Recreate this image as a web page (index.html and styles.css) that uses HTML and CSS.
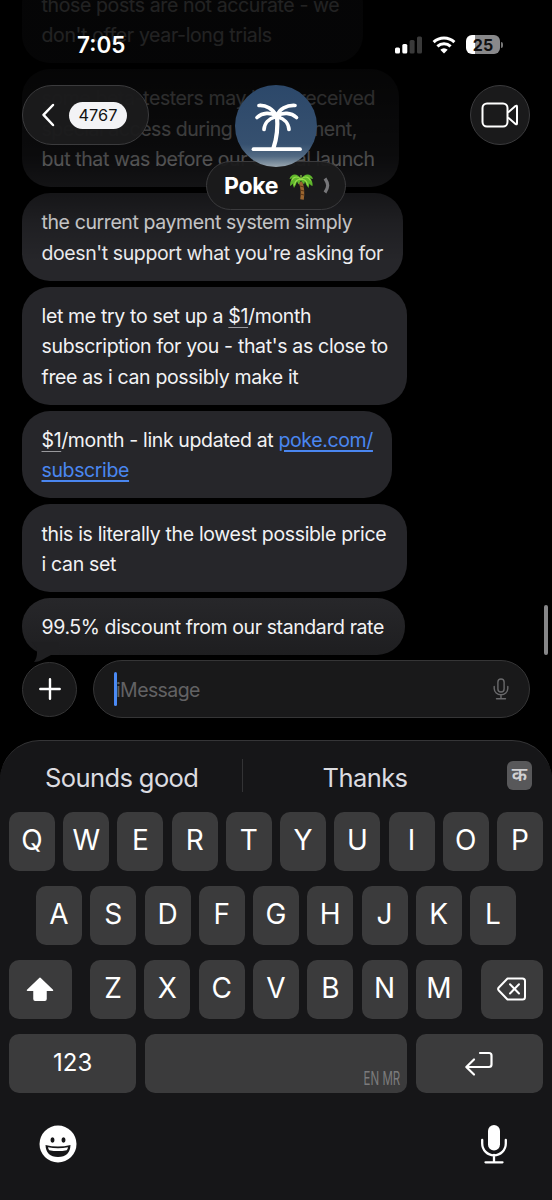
FILE: index.html
```html
<!DOCTYPE html>
<html lang="en">
<head>
<meta charset="utf-8">
<title>Messages</title>
<link rel="stylesheet" href="styles.css">
</head>
<body>
<div class="phone">
  <main class="thread">
    <div class="bubble w1"><p>those posts are not accurate - we</p><p>don't offer year-long trials</p></div>
    <div class="bubble w2"><p>some beta-testers may have received</p><p class="tight">special access during development,</p><p>but that was before our official launch</p></div>
    <div class="bubble w3"><p>the current payment system simply</p><p>doesn't support what you're asking for</p></div>
    <div class="bubble w4"><p>let me try to set up a <span class="amount">$1</span>/month</p><p>subscription for you - that's as close to</p><p>free as i can possibly make it</p></div>
    <div class="bubble w5"><p><span class="amount">$1</span>/month - link updated at <a class="link">poke.com/</a></p><p><a class="link">subscribe</a></p></div>
    <div class="bubble w6"><p>this is literally the lowest possible price</p><p>i can set</p></div>
    <div class="bubble w7 last"><p>99.5% discount from our standard rate</p>
      <svg class="tail" width="34" height="24" viewBox="0 0 34 24"><path d="M4 2C9 6 10 9 10 12c0 5-1 7-3 10 7 0 12-5 17-7h8V2z" fill="#1f1f21"/></svg>
    </div>
  </main>
  <div class="fade"></div>
  <div class="scrollbar"></div>

  <header class="top">
    <div class="status">
      <span class="clock">7:05</span>
      <span class="indicators">
        <svg width="28" height="18" viewBox="0 0 28 18"><rect x="0" y="11.500" width="5" height="6" rx="1.500" fill="#fff"/><rect x="7.300" y="8" width="5" height="9.500" rx="1.500" fill="#fff"/><rect x="14.600" y="4" width="5" height="13.500" rx="1.500" fill="#3a3a3a"/><rect x="22" y="0.500" width="5" height="17" rx="1.500" fill="#3a3a3a"/></svg>
        <svg class="wifi" width="24" height="18" viewBox="0 0 24 18" fill="none" stroke="#fff" stroke-width="3"><path d="M1.600 6.200a15 15 0 0 1 20.800 0"/><path d="M5.400 10.400a9.500 9.500 0 0 1 13.200 0"/><path d="M12 17.500l-3.700-3.800a5.300 5.300 0 0 1 7.400 0z" fill="#fff" stroke="none"/></svg>
        <span class="battery"><b>25</b></span><i class="nub"></i>
      </span>
    </div>
    <div class="nav">
      <div class="back glass">
        <svg width="14" height="24" viewBox="0 0 14 24"><path d="M12 2L2.500 11.800 12 22" fill="none" stroke="#fff" stroke-width="2.500" stroke-linecap="round" stroke-linejoin="round"/></svg>
        <span class="count">4767</span>
      </div>
      <div class="contact">
        <svg class="avatar" width="82" height="82" viewBox="0 0 82 82">
          <defs><linearGradient id="sea" x1="0" y1="0" x2="0" y2="1"><stop offset="0" stop-color="#2c486a"/><stop offset=".72" stop-color="#36506f"/><stop offset=".87" stop-color="#526a83"/><stop offset="1" stop-color="#9aa7b0"/></linearGradient></defs>
          <circle cx="41" cy="41" r="41" fill="url(#sea)"/>
          <g fill="none" stroke="#fff" stroke-linecap="round"><path d="M18.500 64.200h46.500" stroke-width="3.800"/><path d="M42 31C43 42 41.500 54 38.500 63" stroke-width="4.200"/><path d="M41.500 31C38 24 31 20 24 20.500M41.500 31c-6-4-14-3.500-19.500 1.500M42 31C44 24 52 20 60 20.500M42 31c6-4 14-3.500 19.500 1.500M40 32c-6 1.500-10.500 6-11 12.500M43 32c6 1.500 10.500 6 11 12.500" stroke-width="3.700"/></g>
        </svg>
        <div class="name glass"><span>Poke</span>
          <svg class="palm" width="26" height="30" viewBox="0 0 26 30">
            <path d="M12.500 11q3 8 1.500 17.500" fill="none" stroke="#9a6530" stroke-width="3.600"/>
            <path d="M12 15l4 1M12 19l4 1M12 23l4 1" stroke="#5d3514" stroke-width="1"/>
            <path d="M13 8C10 2 3 2 1.500 8q2 0 3-1-3 4-2.500 8 2-1 2.500-2.500L6 17q2-3 3-6.500l1.500 3L13 9.500l3 4 1-3q1 4 3.500 6.500l1-4.500q1 2 3 2.500.500-4.500-2.500-8 1.500 1 3 1C23.500 2 16 2 13 8z" fill="#5fb62c"/>
            <path d="M13 8.500C10 5 6 5 3.500 9.500M13 8.500C9.500 8 7 10.500 6.200 14.500M13 8.500c3-3.500 7-3.500 9.500 1M13 8.500c3.500-.500 6 2 6.800 6M13 8.500V4" fill="none" stroke="#9add4c" stroke-width="1.100"/>
          </svg>
          <svg width="9" height="19" viewBox="0 0 9 19"><path d="M2 2.500c3.600 5.500 3.600 8.500 0 14" fill="none" stroke="#77777a" stroke-width="3.200"/></svg></div>
      </div>
      <div class="video glass">
        <svg width="38" height="26" viewBox="0 0 38 26" fill="none" stroke="#fff" stroke-width="2" stroke-linejoin="round"><rect x="1.500" y="1.500" width="25" height="23" rx="4.500"/><path d="M27 10.500L34.500 4q1.500-1 1.500.8v16.400q0 1.800-1.500.8L27 15.500"/></svg>
      </div>
    </div>
  </header>

  <section class="compose">
    <div class="plus glass"><svg width="22" height="22" viewBox="0 0 22 22"><path d="M11 1.300v19.400M1.300 11h19.400" stroke="#fff" stroke-width="2.400" stroke-linecap="round"/></svg></div>
    <div class="field glass"><i class="caret"></i><span class="placeholder">iMessage</span>
      <svg width="16" height="22" viewBox="0 0 16 22" fill="none" stroke="#69696b" stroke-width="1.400" stroke-linecap="round"><rect x="4.900" y="1" width="6.200" height="13" rx="3.100"/><path d="M1.200 8.500v2a6.800 6.300 0 0 0 13.600 0v-2M8 17v3.500M3.500 20.700h9"/></svg>
    </div>
  </section>

  <section class="keyboard">
    <div class="suggest"><span class="s1">Sounds good</span><i class="divider"></i><span class="s2">Thanks</span><span class="lang">क</span></div>
    <div class="row"><b>Q</b><b>W</b><b>E</b><b>R</b><b>T</b><b>Y</b><b>U</b><b>I</b><b>O</b><b>P</b></div>
    <div class="row mid"><b>A</b><b>S</b><b>D</b><b>F</b><b>G</b><b>H</b><b>J</b><b>K</b><b>L</b></div>
    <div class="row third">
      <b class="side"><svg width="30" height="26" viewBox="0 0 30 26"><path d="M15 2.200L27.500 14.300H21V23q0 1.200-1.200 1.200h-9.600Q9 24.200 9 23v-8.700H2.500z" fill="#fff" stroke="#fff" stroke-width="1.500" stroke-linejoin="round"/></svg></b>
      <span class="letters"><b>Z</b><b>X</b><b>C</b><b>V</b><b>B</b><b>N</b><b>M</b></span>
      <b class="side"><svg width="30" height="24" viewBox="0 0 30 24" fill="none" stroke="#fff" stroke-width="2" stroke-linejoin="round" stroke-linecap="round"><path d="M10.500 1.500H25.500q2.500 0 2.500 2.500v16q0 2.500-2.500 2.500H10.500L1.800 13.500q-1.400-1.500 0-3z"/><path d="M13 7.300l9 9.200M22 7.300l-9 9.200"/></svg></b>
    </div>
    <div class="row bottom"><b class="num">123</b><b class="space"><small>EN MR</small></b><b class="num return"><svg width="30" height="26" viewBox="0 0 30 26" fill="none" stroke="#fff" stroke-width="2.200" stroke-linejoin="round" stroke-linecap="round"><path d="M16 2h9q2.500 0 2.500 2.500v9q0 2.500-2.500 2.500H2.500M10 8.500L2.300 16l7.700 7.500"/></svg></b></div>
    <div class="dock">
      <svg class="smile" width="38" height="38" viewBox="0 0 38 38"><circle cx="19" cy="19" r="18.500" fill="#fff"/><g fill="#161618"><ellipse cx="13.500" cy="15" rx="2" ry="2.700"/><ellipse cx="24.500" cy="15" rx="2" ry="2.700"/><path d="M6.500 20Q19 23 31.500 20 31 32 19 32 7 32 6.500 20z"/></g><path d="M9 22.200q10 2 20 0-.3 2-1.300 3Q19 27 10.300 25.200 9.300 24 9 22.200z" fill="#fff"/></svg>
      <svg width="28" height="42" viewBox="0 0 28 42"><rect x="8" y="2" width="12" height="25.500" rx="6" fill="#fff"/><path d="M2.200 17v3.500a11.800 11.800 0 0 0 23.600 0V17M14 32v7M5.500 39.300h17" fill="none" stroke="#fff" stroke-width="2.300" stroke-linecap="round"/></svg>
    </div>
  </section>
</div>
</body>
</html>
```
FILE: styles.css
```css
* { box-sizing: border-box; }
body { margin: 0; background: #000; color: #f2f2f4; font-family: Inter, "Liberation Sans", sans-serif; }
p { margin: 0; }
svg { display: block; flex: none; }
.phone { position: relative; width: 552px; height: 1200px; overflow: hidden; display: flex; flex-direction: column; background: #000; }

.thread { height: 655px; padding-left: 22px; display: flex; flex-direction: column; justify-content: flex-end; align-items: flex-start; gap: 6.2px; }
.bubble { flex: none; padding: 14.100px 19.500px 12.500px; border-radius: 28px; background: #26262a; font-size: 19.500px; line-height: 30.400px; letter-spacing: -.4px; white-space: nowrap; }
.w1 { width: 341px; letter-spacing: -.37px; }
.w2 { width: 377px; }
.w3 { width: 381px; }
.w4 { width: 385px; letter-spacing: -.34px; }
.w5 { width: 370px; letter-spacing: -.37px; }
.w6 { width: 385px; letter-spacing: -.34px; }
.w7 { width: 382.500px; }
.tight { letter-spacing: -.47px; }
.last { position: relative; background: linear-gradient(#27272a, #1e1e20); }
.tail { position: absolute; left: 5px; top: 42px; }
.amount { text-decoration: underline; text-decoration-color: #98989c; text-decoration-thickness: 1px; text-underline-offset: 4px; }
.link { color: #4a86f0; text-decoration: underline; text-decoration-thickness: 1.500px; text-underline-offset: 3px; }

.fade { position: absolute; left: 0; top: 0; width: 552px; height: 270px; background: linear-gradient(rgba(0,0,0,.86) 0, rgba(0,0,0,.86) 70px, rgba(0,0,0,.81) 100px, rgba(0,0,0,.71) 155px, rgba(0,0,0,.5) 185px, rgba(0,0,0,.2) 222px, transparent 262px); }
.scrollbar { position: absolute; left: 544px; top: 605px; width: 4px; height: 50px; border-radius: 2px; background: #868688; }

.top { position: absolute; left: 0; top: 0; width: 552px; isolation: isolate; }
.status { height: 85px; padding: 34px 49px 0 77px; display: flex; justify-content: space-between; align-items: flex-start; }
.clock { font-size: 22.500px; line-height: 22px; font-weight: 600; color: #fff; }
.indicators { display: flex; align-items: center; padding-top: 1px; }
.wifi { margin: 0 10px 0 9px; }
.battery { width: 34px; height: 19px; border-radius: 6px; background: linear-gradient(90deg, #fff 9px, #89898b 9px); display: flex; align-items: center; justify-content: center; color: #111; font-size: 16px; }
.nub { width: 2px; height: 6px; margin-left: 1px; border-radius: 0 2px 2px 0; background: #777; }
.nav { display: flex; align-items: flex-start; padding: 0 22px; }
.glass { background: rgba(27,27,28,.96); border: 1px solid #3b3b3d; }
.back { width: 127px; height: 60px; border-radius: 30px; display: flex; align-items: center; padding-left: 18px; gap: 14px; }
.count { width: 58px; height: 27px; border-radius: 14px; background: #f3f3f5; color: #111; font-size: 16.300px; line-height: 27px; text-align: center; }
.contact { width: 140px; margin-left: 57px; display: flex; flex-direction: column; align-items: center; }
.name { position: relative; z-index: -1; margin-top: -6px; width: 140px; height: 49px; border-radius: 25px; display: flex; align-items: center; padding-left: 17px; color: #fff; font-size: 23px; font-weight: 700; letter-spacing: -.3px; }
.palm { margin: 0 9px 0 auto; }
.name svg:last-child { margin-right: 13px; }
.video { width: 60px; height: 60px; margin-left: auto; border-radius: 30px; display: flex; align-items: center; justify-content: center; }

.compose { height: 85px; padding: 5px 22px 0; display: flex; justify-content: space-between; position: relative; }
.compose .glass { background: #19191a; border-color: #353536; }
.plus { width: 55px; height: 55px; margin-top: 1.500px; border-radius: 28px; display: flex; align-items: center; justify-content: center; }
.field { width: 437px; height: 58px; border-radius: 29px; padding: 0 20px; display: flex; align-items: center; }
.caret { width: 3px; height: 34px; border-radius: 2px; background: #4b8af5; }
.placeholder { flex: 1; font-size: 19.500px; letter-spacing: -.6px; color: #626264; padding-top: 1px; margin-left: -1px; }

.keyboard { height: 460px; border-radius: 40px 40px 0 0; background: #161618; border-top: 1.500px solid #353537; padding: 0 9px; }
.suggest { height: 70.500px; display: flex; align-items: center; font-size: 25.500px; letter-spacing: -.6px; color: #dcdce0; }
.s1 { width: 233px; padding-left: 36px; padding-top: 3px; white-space: nowrap; }
.divider { width: 1px; height: 33px; background: #333335; margin-bottom: 2px; }
.s2 { width: 244px; padding-top: 3px; text-align: center; }
.lang { margin-left: 20px; width: 25px; height: 29px; border-radius: 6px; background: #58585a; font: 600 19px/32px "Noto Sans Devanagari", "Noto Sans", sans-serif; letter-spacing: 0; text-align: center; color: #d0d0d2; margin-bottom: 2px; }
.row, .letters { display: flex; justify-content: space-between; }
.row { width: 534px; height: 59px; margin-bottom: 15.200px; }
.row b { width: 46px; height: 59px; border-radius: 10px; background: #3b3b3c; color: #fff; font-weight: 400; font-size: 28px; display: flex; align-items: center; justify-content: center; padding-bottom: 2px; }
.row .side, .row .return { padding-bottom: 0; }
.mid { width: 480px; margin-left: 27px; }
.letters { width: 372px; }
.row .side { width: 62.500px; }
.row .num { width: 127.300px; font-size: 24px; }
.row .space { width: 262px; justify-content: flex-end; align-items: flex-end; }
.space small { font-size: 18px; line-height: 17px; color: #7b7b7d; transform: scaleX(.64); transform-origin: right; padding: 0 11px 4px 0; }
.dock { display: flex; justify-content: space-between; align-items: flex-start; padding: 15px 35px 0 30px; }
.smile { margin-top: 2px; }
```
